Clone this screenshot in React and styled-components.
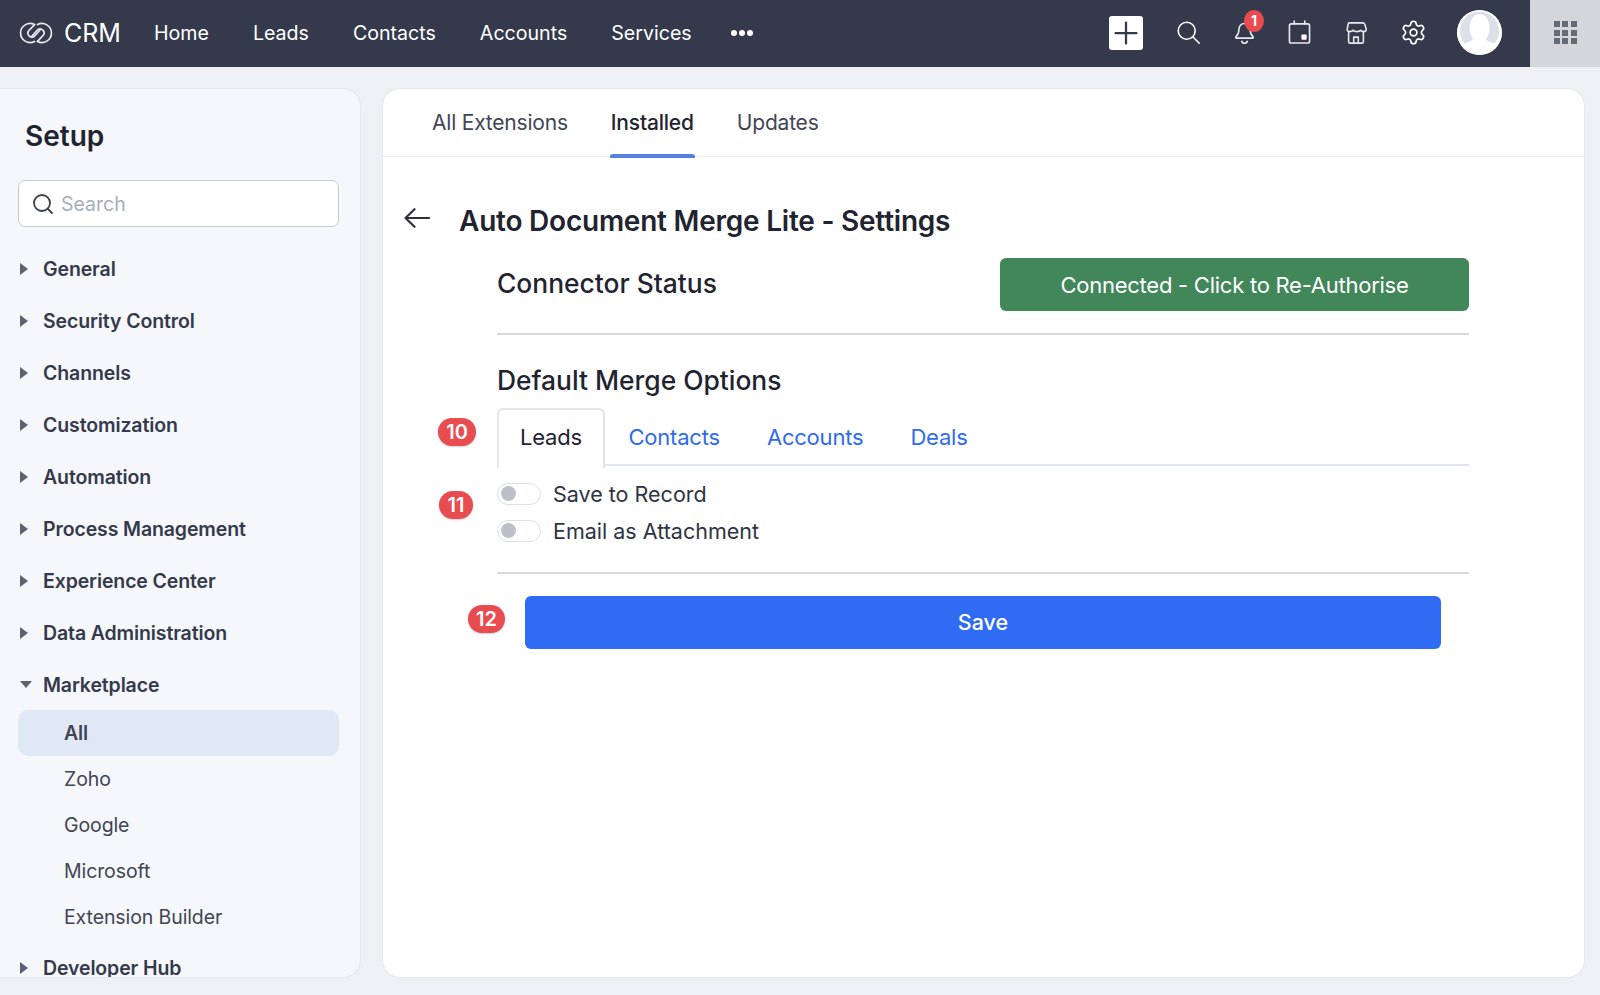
import React from 'react';
import styled, { createGlobalStyle } from 'styled-components';
import { Search, Settings, Plus } from 'lucide-react';

const GlobalStyle = createGlobalStyle`
  html, body {
    margin: 0;
    height: 100%;
    overflow: hidden;
    background: #eef0f4;
    font-family: Inter, "Liberation Sans", sans-serif;
  }
  * { box-sizing: border-box; }
`;

const Page = styled.div`
  width: 1600px;
  height: 995px;
  display: flex;
  flex-direction: column;
  background: #eef0f4;
  overflow: hidden;
`;

const TopBar = styled.header`
  height: 67px;
  flex: none;
  display: flex;
  align-items: center;
  background: #343a4b;
  color: #fff;
`;

const Logo = styled.div`
  display: flex;
  align-items: center;
  gap: 11px;
  padding: 0 0 2px 19px;
  font-size: 25px;
  width: 154px;
  font-weight: 400;
`;

const TopNav = styled.nav`
  display: flex;
  align-items: center;
  gap: 44px;
  flex: 1;
  padding-bottom: 2px;
`;

const TopLink = styled.a`
  font-size: 19.6px;
  color: #fff;
`;

const Dots = styled.span`
  display: flex;
  gap: 2px;
  margin-left: -5px;
  i {
    width: 6px;
    height: 6px;
    border-radius: 50%;
    background: #fff;
  }
`;

const TopIcons = styled.div`
  display: flex;
  align-items: center;
  padding-bottom: 2px;
`;

const AddButton = styled.button`
  width: 34px;
  height: 34px;
  border: none;
  padding: 0;
  border-radius: 3px;
  background: #fff;
  color: #343a4b;
  display: flex;
  align-items: center;
  justify-content: center;
  margin-right: 30px;
  svg { flex: none; }
`;

const IconSlot = styled.span`
  position: relative;
  width: 30px;
  height: 30px;
  margin-right: ${p => p.$gap}px;
  display: flex;
  align-items: center;
  justify-content: center;
  color: #fff;
`;

const BellBadge = styled.span`
  position: absolute;
  top: -8px;
  right: -5px;
  width: 20px;
  height: 22px;
  border-radius: 50%;
  background: #e84b50;
  font-size: 14px;
  font-weight: 700;
  display: flex;
  align-items: center;
  justify-content: center;
`;

const Avatar = styled.span`
  width: 45px;
  height: 45px;
  border-radius: 50%;
  overflow: hidden;
  background: #fff;
  margin-right: 28px;
  display: block;
`;

const AppsTile = styled.div`
  width: 70px;
  align-self: stretch;
  background: #d4d6da;
  display: flex;
  align-items: center;
  justify-content: center;
  padding-bottom: 2px;
`;

const AppsGrid = styled.div`
  display: grid;
  grid-template-columns: repeat(3, 6px);
  gap: 2.5px;
  i { height: 6px; background: #646a76; }
`;

const Body = styled.div`
  flex: 1;
  display: flex;
  gap: 21px;
  padding: 21px 15px 17px 0;
  min-height: 0;
`;

const Sidebar = styled.aside`
  width: 361px;
  flex: none;
  background: #f5f7fb;
  border: 1px solid #e4e7ee;
  border-left: none;
  border-radius: 0 18px 18px 0;
  overflow: hidden;
  padding: 0 21px 0 18px;
`;

const SetupTitle = styled.h2`
  margin: 30px 0 27px 7px;
  font-size: 28px;
  line-height: 34px;
  font-weight: 600;
  color: #1f2430;
`;

const SearchBox = styled.div`
  height: 47px;
  border: 1.5px solid #c6cad2;
  border-radius: 7px;
  background: #fff;
  display: flex;
  align-items: center;
  gap: 6px;
  padding-left: 12px;
  color: #3a4050;
  margin-bottom: 16px;
`;

const Placeholder = styled.span`
  font-size: 19.5px;
  color: #a9aeb9;
`;

const MenuList = styled.ul`
  list-style: none;
  margin: 0;
  padding: 0;
`;

const MenuItem = styled.li`
  height: ${p => (p.$open ? 51 : 52)}px;
  margin-top: ${p => (p.$last ? 2 : 0)}px;
  display: flex;
  align-items: center;
  gap: 15px;
  padding-left: 2px;
  font-size: 19.5px;
  letter-spacing: -0.12px;
  font-weight: 600;
  color: #343a4b;
`;

const Caret = styled.span`
  width: 0;
  height: 0;
  flex: none;
  ${p => p.$open
    ? `border-left: 6px solid transparent; border-right: 6px solid transparent; border-top: 7px solid #5c6270; margin-right: -4px;`
    : `border-top: 6px solid transparent; border-bottom: 6px solid transparent; border-left: 8px solid #5c6270;`}
`;

const SubItem = styled.li`
  height: 46px;
  display: flex;
  align-items: center;
  padding-left: 46px;
  border-radius: 10px;
  font-size: 19.5px;
  letter-spacing: -0.1px;
  font-weight: ${p => (p.$active ? 600 : 400)};
  color: #3f4554;
  background: ${p => (p.$active ? '#e0e8f5' : 'transparent')};
`;

const Panel = styled.main`
  flex: 1;
  background: #fff;
  border: 1px solid #e4e7ee;
  border-radius: 18px;
  overflow: hidden;
`;

const PanelTabs = styled.div`
  height: 68px;
  display: flex;
  gap: 41px;
  padding-left: 48px;
  border-bottom: 1px solid #eceef2;
`;

const PanelTab = styled.a`
  position: relative;
  height: 68px;
  padding: 21px 1px 0;
  font-size: 21px;
  letter-spacing: -0.2px;
  font-weight: ${p => (p.$active ? 500 : 400)};
  color: ${p => (p.$active ? '#1f2430' : '#3f4554')};
  ${p => p.$active && `
    &::after {
      content: '';
      position: absolute;
      left: 0;
      right: 0;
      bottom: -1px;
      height: 4px;
      border-radius: 3px 3px 0 0;
      background: #5580e0;
    }
  `}
`;

const Content = styled.div`
  padding: 44px 0 0 21px;
`;

const TitleRow = styled.div`
  display: flex;
  align-items: center;
  gap: 29px;
  color: #1f2430;
`;

const ArrowWrap = styled.span`
  display: flex;
  margin-top: -6px;
`;

const PageTitle = styled.h1`
  margin: 0;
  font-size: 28px;
  line-height: 40px;
  font-weight: 600;
  letter-spacing: -0.23px;
  color: #1f2430;
`;

const Section = styled.div`
  margin-left: 93px;
  width: 972px;
`;

const ConnectorRow = styled.div`
  display: flex;
  align-items: center;
  justify-content: space-between;
  padding: 17px 0 22px;
  border-bottom: 2px solid #d6d8dc;
`;

const SectionTitle = styled.h3`
  margin: 0;
  font-size: 26.4px;
  line-height: 36px;
  font-weight: 500;
  color: #1f2430;
`;

const ConnectorTitle = styled(SectionTitle)`
  margin-top: -4px;
`;

const ConnectButton = styled.button`
  width: 469px;
  height: 53px;
  border: none;
  border-radius: 6px;
  background: #42875a;
  color: #fff;
  font: 400 22px Inter, sans-serif;
  letter-spacing: -0.25px;
`;

const OptionsTitle = styled(SectionTitle)`
  margin: 27px 0 10px;
`;

const MergeTabs = styled.div`
  position: relative;
  display: flex;
  height: 58px;
  border-bottom: 2px solid #e2e5ec;
`;

const MergeTab = styled.a`
  height: 58px;
  padding: 16px 23.5px 0;
  font-size: 22px;
  letter-spacing: -0.2px;
  color: ${p => (p.$active ? '#1f2430' : '#2f6bf0')};
  ${p => p.$active && `
    background: #fff;
    border: 2px solid #e2e5ec;
    border-bottom: none;
    border-radius: 6px 6px 0 0;
    margin-bottom: -2px;
    height: 60px;
    padding: 14px 21px 0;
  `}
`;

const Badge = styled.span`
  position: absolute;
  left: ${p => p.$left}px;
  top: ${p => p.$top}px;
  width: ${p => p.$w}px;
  height: 28px;
  border-radius: 14px;
  background: #e84b50;
  color: #fff;
  font-size: 20px;
  font-weight: 600;
  display: flex;
  align-items: center;
  justify-content: center;
  box-shadow: 0 1px 2px rgba(0,0,0,.2);
`;

const Toggles = styled.div`
  position: relative;
  padding: 10px 0 23px;
  border-bottom: 2px solid #d6d8dc;
`;

const ToggleRow = styled.div`
  height: 36.500px;
  display: flex;
  align-items: center;
  gap: 12px;
  font-size: 21.5px;
  color: #2e3442;
`;

const Toggle = styled.span`
  width: 44px;
  height: 22px;
  border: 1.5px solid #dcdfe7;
  border-radius: 11px;
  background: #fff;
  padding: 2px 0 0 3px;
  i {
    display: block;
    width: 15px;
    height: 15px;
    border-radius: 50%;
    background: #bcc0c8;
  }
`;

const SaveRow = styled.div`
  position: relative;
  padding: 22px 28px 0;
`;

const SaveButton = styled.button`
  width: 916px;
  height: 53px;
  border: none;
  border-radius: 6px;
  padding: 0 0 2px;
  background: #306cf3;
  color: #fff;
  font: 500 21.5px Inter, sans-serif;
`;

const ZohoMark = () => (
  <svg width="34" height="22" viewBox="0 0 34 22" fill="none" stroke="#e8e9ec" strokeWidth="1.7" strokeLinecap="round">
    <path d="M15.500 2.600A9.500 9.500 0 1 0 15.500 19.400" />
    <path d="M18.500 19.400A9.500 9.500 0 1 0 18.500 2.600" />
    <path d="M15.500 2.600L9.500 9a4 4 0 0 0 5.500 5.500L21 8" />
    <path d="M18.500 19.400L24.500 13a4 4 0 0 0-5.500-5.500L13 14" />
  </svg>
);

const SearchGlyph = () => (
  <svg width="25" height="25" viewBox="0 0 28 28" fill="none" stroke="#fff" strokeWidth="1.800" strokeLinecap="round">
    <circle cx="12" cy="12" r="9.500" />
    <path d="M18.800 18.800L26 26" />
  </svg>
);

const BellGlyph = () => (
  <svg width="21" height="24" viewBox="0 0 24 28" fill="none" stroke="#e8e9ec" strokeWidth="1.800" strokeLinejoin="round">
    <path d="M12 3c-4 0-6.500 3-6.500 7 0 4-1 6-3.500 8.500-.6.8-.2 1.500.6 1.500h18.800c.8 0 1.200-.7.600-1.500C19.500 16 18.500 14 18.500 10c0-4-2.500-7-6.500-7z" />
    <path d="M8.500 23c.5 2 2 3 3.500 3s3-1 3.500-3" />
  </svg>
);

const CalendarGlyph = () => (
  <svg width="23" height="25" viewBox="0 0 24 26" fill="none" stroke="#e8e9ec" strokeWidth="1.700" strokeLinecap="round">
    <rect x="1.500" y="4" width="21" height="20" rx="2" />
    <path d="M6.500 1v3M17.500 1v3" />
    <rect x="14" y="15" width="5.500" height="5.500" rx="1" fill="#fff" stroke="none" />
  </svg>
);

const StoreGlyph = () => (
  <svg width="24" height="24" viewBox="0 0 24 26" fill="none" stroke="#e8e9ec" strokeWidth="1.700" strokeLinejoin="round">
    <path d="M4.500 2h15c1 0 1.500.5 2 1.500l1.500 5c.5 2-1 3-2.500 3-1.500 0-2.800-.5-3.500-1.500-.7 1-2.500 1.500-4 1.500s-3.300-.5-4-1.500C8.300 11 7 11.500 5 11.500c-1.500 0-3-1-2.500-3l1-5C3.700 2.500 4 2 4.500 2z" />
    <path d="M4 12v10.500c0 1 .5 1.500 1.500 1.500h13c1 0 1.500-.5 1.500-1.500V12" />
    <path d="M9.500 24v-6.500h5V24" />
  </svg>
);

const AvatarGlyph = () => (
  <svg width="45" height="45" viewBox="0 0 45 45">
    <circle cx="22.500" cy="22.500" r="22.500" fill="#fff" />
    <circle cx="22.500" cy="21" r="19.500" fill="#dde0e7" />
    <ellipse cx="22.500" cy="18" rx="10" ry="14" fill="#fff" />
    <path d="M16 27c0 3-1 4-7 6l-5 3 8 7h21l8-7-5-3c-6-2-7-3-7-6z" fill="#fff" />
  </svg>
);

const BackArrow = () => (
  <svg width="26" height="20" viewBox="0 0 26 20" fill="none" stroke="#2b3040" strokeWidth="2.200" strokeLinecap="round" strokeLinejoin="round">
    <path d="M25 10H1.500M10.500 1.200L1.500 10l9 8.800" />
  </svg>
);

const topLinks = ['Home', 'Leads', 'Contacts', 'Accounts', 'Services'];
const setupGroups = ['General', 'Security Control', 'Channels', 'Customization', 'Automation', 'Process Management', 'Experience Center', 'Data Administration'];
const marketplace = ['All', 'Zoho', 'Google', 'Microsoft', 'Extension Builder'];

export default function App() {
  return (
    <Page>
      <GlobalStyle />
      <TopBar>
        <Logo><ZohoMark />CRM</Logo>
        <TopNav>
          {topLinks.map(l => <TopLink key={l}>{l}</TopLink>)}
          <Dots><i /><i /><i /></Dots>
        </TopNav>
        <TopIcons>
          <AddButton><Plus size={36} strokeWidth={1.500} /></AddButton>
          <IconSlot $gap={26}><SearchGlyph /></IconSlot>
          <IconSlot $gap={25}><BellGlyph /><BellBadge>1</BellBadge></IconSlot>
          <IconSlot $gap={27}><CalendarGlyph /></IconSlot>
          <IconSlot $gap={27}><StoreGlyph /></IconSlot>
          <IconSlot $gap={29}><Settings size={27} strokeWidth={1.500} /></IconSlot>
          <Avatar><AvatarGlyph /></Avatar>
        </TopIcons>
        <AppsTile>
          <AppsGrid>{Array.from({ length: 9 }, (_, i) => <i key={i} />)}</AppsGrid>
        </AppsTile>
      </TopBar>
      <Body>
        <Sidebar>
          <SetupTitle>Setup</SetupTitle>
          <SearchBox>
            <Search size={24} strokeWidth={1.800} />
            <Placeholder>Search</Placeholder>
          </SearchBox>
          <MenuList>
            {setupGroups.map(g => <MenuItem key={g}><Caret />{g}</MenuItem>)}
            <MenuItem $open><Caret $open />Marketplace</MenuItem>
            {marketplace.map((m, i) => <SubItem key={m} $active={i === 0}>{m}</SubItem>)}
            <MenuItem $last><Caret />Developer Hub</MenuItem>
          </MenuList>
        </Sidebar>
        <Panel>
          <PanelTabs>
            <PanelTab>All Extensions</PanelTab>
            <PanelTab $active>Installed</PanelTab>
            <PanelTab>Updates</PanelTab>
          </PanelTabs>
          <Content>
            <TitleRow>
              <ArrowWrap><BackArrow /></ArrowWrap>
              <PageTitle>Auto Document Merge Lite - Settings</PageTitle>
            </TitleRow>
            <Section>
              <ConnectorRow>
                <ConnectorTitle>Connector Status</ConnectorTitle>
                <ConnectButton>Connected - Click to Re-Authorise</ConnectButton>
              </ConnectorRow>
              <OptionsTitle>Default Merge Options</OptionsTitle>
              <MergeTabs>
                <Badge $left={-59} $top={10} $w={38}>10</Badge>
                <MergeTab $active>Leads</MergeTab>
                <MergeTab>Contacts</MergeTab>
                <MergeTab>Accounts</MergeTab>
                <MergeTab>Deals</MergeTab>
              </MergeTabs>
              <Toggles>
                <Badge $left={-58} $top={25} $w={34}>11</Badge>
                <ToggleRow><Toggle><i /></Toggle>Save to Record</ToggleRow>
                <ToggleRow><Toggle><i /></Toggle>Email as Attachment</ToggleRow>
              </Toggles>
              <SaveRow>
                <Badge $left={-29} $top={31} $w={37}>12</Badge>
                <SaveButton>Save</SaveButton>
              </SaveRow>
            </Section>
          </Content>
        </Panel>
      </Body>
    </Page>
  );
}
